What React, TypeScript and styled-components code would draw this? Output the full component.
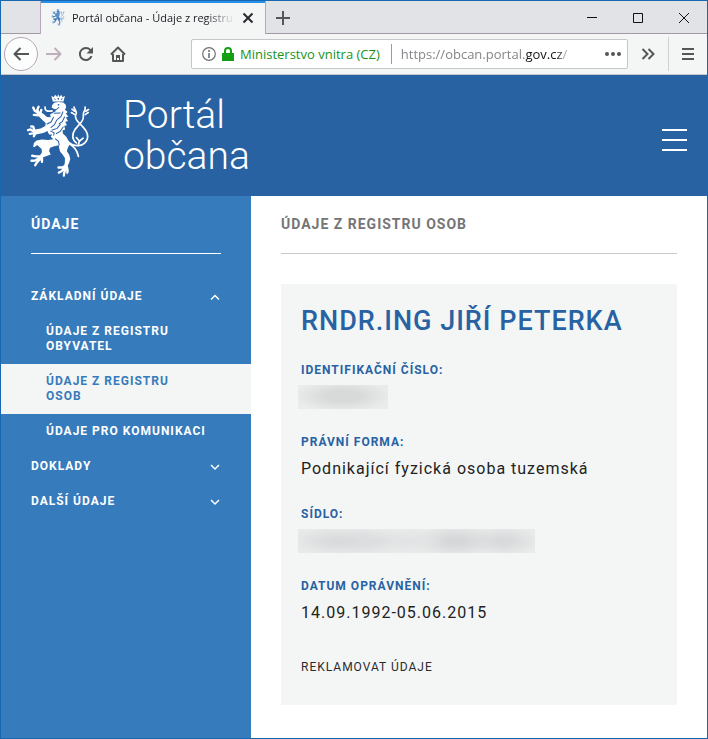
import React, { useState } from "react";
import styled, { createGlobalStyle, css } from "styled-components";

const uiFont = '"Open Sans", "Noto Sans", sans-serif';

const GlobalStyle = createGlobalStyle`
  *, *::before, *::after { box-sizing: border-box; }
  html, body, #root { height: 100%; }
  body {
    margin: 0;
    font-family: Roboto, "Liberation Sans", sans-serif;
    color: #222;
    background: #fff;
  }
  button { font: inherit; color: inherit; background: none; border: 0; padding: 0; cursor: pointer; }
  ul { list-style: none; margin: 0; padding: 0; }
  svg { display: block; flex: none; }
`;

const Window = styled.div`
  display: flex;
  flex-direction: column;
  min-height: 100%;
  border: 1px solid #1868b0;
`;

const TabStrip = styled.div`
  display: flex;
  height: 33px;
  padding-left: 39px;
  background: #e2e3e6;
  box-shadow: inset 0 -1px #a39aa6;
`;

const Tab = styled.div`
  display: flex;
  align-items: center;
  width: 226px;
  padding: 0 11px 0 10px;
  gap: 7px;
  background: #f4f6f6;
  border: solid #b9a6b6;
  border-width: 0 1px;
  box-shadow: inset 0 2px #2a8fe8;
  font-family: ${uiFont};
`;

const TabTitle = styled.span`
  flex: 1;
  overflow: hidden;
  white-space: nowrap;
  font-size: 11px;
  line-height: 16px;
  color: #1c1c20;
  mask-image: linear-gradient(to right, #000 82%, transparent);
`;

const IconButton = styled.button<{ $w: number; $tone?: string }>`
  display: flex;
  align-items: center;
  justify-content: center;
  flex: none;
  width: ${(p) => p.$w}px;
  color: ${(p) => p.$tone || "#565659"};
`;

const WindowControls = styled.div`
  display: flex;
  margin-left: auto;
`;

const NavBar = styled.div`
  display: flex;
  align-items: center;
  height: 41px;
  background: #f4f6f6;
  border-bottom: 1px solid #c5c7ca;
`;

const BackButton = styled(IconButton)`
  height: 34px;
  margin-left: 3px;
  border: 1px solid #b9a6b6;
  border-radius: 50%;
  background: #fcfdfd;
`;

const AddressBar = styled.div`
  display: flex;
  align-items: center;
  flex: 1;
  min-width: 0;
  height: 30px;
  margin-left: 57px;
  padding: 0 6px 0 10px;
  background: #fff;
  border: 1px solid #c6c7ca;
  border-radius: 2px;
  font-family: ${uiFont};
  font-size: 13px;
  line-height: 20px;
`;

const Identity = styled.button`
  display: flex;
  align-items: center;
  gap: 6px;
  flex: none;
  padding-right: 11px;
  border-right: 1px solid #9b9b9f;
  color: #17931a;
  white-space: nowrap;
`;

const Url = styled.span`
  flex: 1;
  overflow: hidden;
  padding-left: 9px;
  white-space: nowrap;
  color: #85868a;
  mask-image: linear-gradient(to right, #000 76%, transparent 92%);
  strong { font-weight: 400; color: #141416; }
`;

const Divider = styled.span`
  width: 1px;
  height: 34px;
  background: #cfd0d2;
`;

const Header = styled.header`
  display: flex;
  align-items: center;
  height: 121px;
  padding: 0 20px 0 26px;
  background: #2862a2;
  color: #fff;
`;

const Brand = styled.a`
  display: flex;
  align-items: center;
  gap: 33px;
  color: inherit;
  text-decoration: none;
  font-size: 39px;
  line-height: 41px;
  font-weight: 300;
`;

const MenuButton = styled.button`
  display: flex;
  flex-direction: column;
  gap: 8px;
  width: 25px;
  margin: 8px 0 0 auto;
  span { height: 2px; background: #fff; }
`;

const Body = styled.div`
  display: flex;
  flex: 1;
`;

const Sidebar = styled.nav`
  flex: none;
  width: 250px;
  background: #367bbb;
  color: #fff;
`;

const Heading = styled.h2<{ $side?: boolean }>`
  margin: ${(p) => (p.$side ? "0 30px 25px" : "0 0 30px")};
  padding: 20px 0;
  border-bottom: 1px solid ${(p) => (p.$side ? "#fff" : "#c9c9c9")};
  color: ${(p) => (p.$side ? "#fff" : "#757577")};
  font-size: 14px;
  line-height: 17px;
  font-weight: 700;
  letter-spacing: 1px;
`;

const navText = css`
  font-size: 12px;
  line-height: 15px;
  font-weight: 700;
  letter-spacing: 1px;
`;

const GroupButton = styled.button`
  ${navText}
  display: flex;
  align-items: center;
  justify-content: space-between;
  width: 100%;
  padding: 10px 30px;
  text-align: left;
`;

const SubLink = styled.a<{ $active?: boolean }>`
  ${navText}
  display: block;
  padding: 10px 45px;
  text-decoration: none;
  color: ${(p) => (p.$active ? "#367bbb" : "#fff")};
  background: ${(p) => (p.$active ? "#f4f6f6" : "transparent")};
`;

const Content = styled.main`
  flex: 1;
  min-width: 0;
  padding: 0 30px 33px;
  background: #fff;
`;

const Card = styled.section`
  padding: 20px 20px 29px;
  background: #f4f6f6;
`;

const Name = styled.h1`
  margin: 0 0 23px;
  color: #2862a2;
  font-size: 27px;
  line-height: 34px;
  font-weight: 500;
  letter-spacing: 1px;
`;

const Details = styled.dl`
  display: grid;
  gap: 24px;
  margin: 0 0 33px;
`;

const Term = styled.dt`
  margin-bottom: 6px;
  color: #2862a2;
  font-size: 12px;
  line-height: 18px;
  font-weight: 700;
  letter-spacing: 1px;
`;

const Value = styled.dd`
  margin: 0;
  font-size: 16px;
  line-height: 24px;
  letter-spacing: 1px;
`;

const Redacted = styled.div<{ $long?: boolean }>`
  width: ${(p) => (p.$long ? 237 : 90)}px;
  height: 24px;
  margin-left: -3px;
  background: ${(p) =>
    p.$long
      ? `radial-gradient(ellipse 52px 15px at 42px 50%, #d9dbdc 20%, transparent),
         radial-gradient(ellipse 40px 14px at 76px 50%, #dedfe0, transparent),
         radial-gradient(ellipse 30px 13px at 116px 50%, #e2e3e4, transparent),
         radial-gradient(ellipse 42px 16px at 158px 50%, #d5d7d8 20%, transparent),
         radial-gradient(ellipse 36px 15px at 206px 50%, #d8dadb 20%, transparent), #e9ebeb`
      : "radial-gradient(ellipse 48px 16px at 50% 46%, #d8dada 35%, transparent), #eaecec"};
`;

const ClaimLink = styled.a`
  display: block;
  color: #2b2b2e;
  font-size: 12px;
  line-height: 18px;
  letter-spacing: 1px;
  text-decoration: none;
`;

const stroke = { fill: "none", stroke: "currentColor" } as const;

function Lion({ width, height, color, cut }: { width: number; height: number; color: string; cut: string }) {
  const line = { fill: "none", stroke: color, strokeLinecap: "round", strokeLinejoin: "round" } as const;
  return (
    <svg width={width} height={height} viewBox="38 29 186 249" fill={color} aria-hidden="true">
      {/* crown */}
      <path d="M110 34L117 39 121 31 127 38 130 30 134 38 139 31 143 39 150 34 146 51H114Z" />
      <path d="M118 40l2 6h4zM137 46h5l1-6zM128 41h5l-1 5h-3z" fill={cut} />
      {/* head, mane and trunk */}
      <path d="M112 62L118 55 130 53 145 54 152 60 154 69 150 75 158 82 153 87 160 96 153 99 159 109 151 112 156 122 148 124 151 134 143 137 144 146 154 156 161 168 163 180 158 190 156 199 163 210 166 222 162 234 157 244 148 242 150 230 150 219 143 208 136 200 133 190 132 181 118 184 106 188 103 198 108 208 98 212 84 217 76 211 82 202 81 192 74 186 68 180 60 186 56 186 58 174 66 167 82 164 100 165 116 163 108 156 112 149 103 149 98 139 88 144 75 147 60 150 55 143 62 134 78 131 92 124 93 115 84 107 75 98 69 88 77 82 87 88 97 97 108 98 106 90 117 83 125 79 116 74 111 70Z" />
      {/* tongue */}
      <path d="M91 68C90 78 98 82 112 79" {...line} strokeWidth="5" />
      {/* paws */}
      <g {...line} strokeWidth="7">
        <path d="M74 88L68 76 72 67M72 86L60 78 56 69M72 92L58 91M78 84L80 76" />
        <path d="M60 142L48 134 41 136M60 138L56 126 50 125M60 145L46 147M62 146L58 154" />
        <path d="M80 214L64 214 53 212M76 218L62 226 51 227M78 220L67 232 62 240M82 218L82 230" />
        <path d="M153 241L142 247 131 247M152 245L140 258 132 262M154 246L148 262 147 271M156 245L158 256 157 262" />
      </g>
      {/* cuts between the locks, ribs and limbs */}
      <g fill="none" stroke={cut} strokeWidth="3" strokeLinecap="round">
        <path d="M112 72C119 78 126 76 132 69M118 86L136 85" />
        <path d="M144 82L138 96 128 104M149 97L142 111 133 117M116 98L109 112 97 118M126 106L119 120 109 128M136 119L127 131 112 136M145 127L136 140 125 146M108 139L118 144 117 151" />
        <path d="M122 162L131 169 133 180" />
      </g>
      <circle cx="131" cy="61" r="2.500" fill={cut} />
      {/* tail */}
      <g {...line} strokeWidth="5">
        <path d="M160 171C180 189 204 183 213 169 226 149 208 131 194 117 182 105 178 97 183 88 187 80 178 76 177 68" />
        <path d="M184 174C171 165 170 148 180 134L199 112C209 101 203 94 205 86 207 77 212 77 210 68" />
        <path d="M178 89L169 84M179 80L171 74M210 90L219 84M212 80L220 75" />
        <path d="M190 179L193 169 204 160M193 169L184 158" />
        <path d="M161 176C178 184 186 194 190 214" />
      </g>
    </svg>
  );
}

function Chevron({ up }: { up?: boolean }) {
  return (
    <svg width="12" height="10" viewBox="0 0 12 10" {...stroke} strokeWidth="1.500" aria-hidden="true">
      <path d={up ? "M2 7.500l4-4 4 4" : "M2 3l4 4 4-4"} />
    </svg>
  );
}

const groups = [
  {
    label: "ZÁKLADNÍ ÚDAJE",
    items: ["ÚDAJE Z REGISTRU OBYVATEL", "ÚDAJE Z REGISTRU OSOB", "ÚDAJE PRO KOMUNIKACI"],
  },
  { label: "DOKLADY", items: [] },
  { label: "DALŠÍ ÚDAJE", items: [] },
];

const details = [
  { term: "IDENTIFIKAČNÍ ČÍSLO:", value: <Redacted role="img" aria-label="Skrytý údaj" /> },
  { term: "PRÁVNÍ FORMA:", value: "Podnikající fyzická osoba tuzemská" },
  { term: "SÍDLO:", value: <Redacted $long role="img" aria-label="Skrytý údaj" /> },
  { term: "DATUM OPRÁVNĚNÍ:", value: "14.09.1992-05.06.2015" },
];

function BrowserChrome() {
  return (
    <>
      <TabStrip>
        <Tab>
          <Lion width={14} height={17} color="#3f7cbd" cut="#c3d8ec" />
          <TabTitle>Portál občana - Údaje z registru</TabTitle>
          <IconButton $w={12} $tone="#2a2a2e" aria-label="Zavřít panel">
            <svg width="12" height="12" viewBox="0 0 12 12" {...stroke} strokeWidth="2">
              <path d="M1.500 1.500l9 9M10.500 1.500l-9 9" />
            </svg>
          </IconButton>
        </Tab>
        <IconButton $w={34} aria-label="Nový panel">
          <svg width="14" height="14" viewBox="0 0 14 14" {...stroke} strokeWidth="2">
            <path d="M7 0v14M0 7h14" />
          </svg>
        </IconButton>
        <WindowControls>
          <IconButton $w={46} $tone="#111" aria-label="Minimalizovat">
            <svg width="10" height="10" viewBox="0 0 10 10" {...stroke}><path d="M0 4.500h10" /></svg>
          </IconButton>
          <IconButton $w={46} $tone="#111" aria-label="Maximalizovat">
            <svg width="10" height="10" viewBox="0 0 10 10" {...stroke}><path d="M.5.5h9v9h-9z" /></svg>
          </IconButton>
          <IconButton $w={46} $tone="#111" aria-label="Zavřít">
            <svg width="10" height="10" viewBox="0 0 10 10" {...stroke}><path d="M0 0l10 10M10 0L0 10" /></svg>
          </IconButton>
        </WindowControls>
      </TabStrip>
      <NavBar>
        <BackButton $w={34} aria-label="Zpět">
          <svg width="16" height="14" viewBox="0 0 16 14" {...stroke} strokeWidth="2" strokeLinejoin="round">
            <path d="M16 7H1.500M7.500 1l-6 6 6 6" />
          </svg>
        </BackButton>
        <IconButton $w={32} $tone="#bfaebb" aria-label="Vpřed">
          <svg width="16" height="14" viewBox="0 0 16 14" {...stroke} strokeWidth="2" strokeLinejoin="round">
            <path d="M0 7h14.500M8.500 1l6 6-6 6" />
          </svg>
        </IconButton>
        <IconButton $w={32} aria-label="Obnovit">
          <svg width="16" height="16" viewBox="0 0 16 16" {...stroke} strokeWidth="2">
            <path d="M12.800 4.600A6 6 0 1 0 13.500 10.200" />
            <path d="M15 1v6.500H8.500z" fill="currentColor" stroke="none" />
          </svg>
        </IconButton>
        <IconButton $w={32} aria-label="Domů">
          <svg width="16" height="16" viewBox="0 0 16 16" {...stroke} strokeWidth="2" strokeLinejoin="round">
            <path d="M1 8.500L8 1.500l7 7M3 8v7h10V8" />
            <path d="M6 9h4v6H9v-3H7v3H6z" fill="currentColor" stroke="none" />
          </svg>
        </IconButton>
        <AddressBar>
          <Identity>
            <svg width="14" height="14" viewBox="0 0 14 14" {...stroke} color="#707074">
              <circle cx="7" cy="7" r="6.300" strokeWidth="1.200" />
              <path d="M7 6v5M7 3v2" strokeWidth="1.600" />
            </svg>
            <svg width="12" height="14" viewBox="0 0 12 14" {...stroke} color="#12a012">
              <path d="M0 6h12v8H0z" fill="currentColor" stroke="none" />
              <path d="M3 7V4a3 3 0 0 1 6 0v3" strokeWidth="2" />
            </svg>
            <span>Ministerstvo vnitra (CZ)</span>
          </Identity>
          <Url>https://obcan.portal.<strong>gov.cz</strong>/</Url>
          <IconButton $w={16} aria-label="Akce stránky">
            <svg width="16" height="4" viewBox="0 0 16 4" fill="currentColor">
              <circle cx="2" cy="2" r="2" /><circle cx="8" cy="2" r="2" /><circle cx="14" cy="2" r="2" />
            </svg>
          </IconButton>
        </AddressBar>
        <IconButton $w={40} aria-label="Další nástroje">
          <svg width="14" height="12" viewBox="0 0 14 12" {...stroke} strokeWidth="2">
            <path d="M1.500 1l5 5-5 5M7.500 1l5 5-5 5" />
          </svg>
        </IconButton>
        <Divider />
        <IconButton $w={38} aria-label="Nabídka prohlížeče">
          <svg width="12" height="12" viewBox="0 0 12 12" {...stroke} strokeWidth="2">
            <path d="M0 1h12M0 6h12M0 11h12" />
          </svg>
        </IconButton>
      </NavBar>
    </>
  );
}

export default function App() {
  const [open, setOpen] = useState(0);
  return (
    <Window>
      <GlobalStyle />
      <BrowserChrome />
      <Header>
        <Brand href="#">
          <Lion width={63} height={84} color="#fff" cut="#2862a2" />
          <span>Portál<br />občana</span>
        </Brand>
        <MenuButton aria-label="Menu"><span /><span /><span /></MenuButton>
      </Header>
      <Body>
        <Sidebar>
          <Heading $side>ÚDAJE</Heading>
          <ul>
            {groups.map((group, i) => (
              <li key={group.label}>
                <GroupButton aria-expanded={open === i} onClick={() => setOpen(open === i ? -1 : i)}>
                  {group.label}
                  <Chevron up={open === i} />
                </GroupButton>
                {open === i && (
                  <ul>
                    {group.items.map((item, n) => (
                      <li key={item}>
                        <SubLink href="#" $active={n === 1}>{item}</SubLink>
                      </li>
                    ))}
                  </ul>
                )}
              </li>
            ))}
          </ul>
        </Sidebar>
        <Content>
          <Heading>ÚDAJE Z REGISTRU OSOB</Heading>
          <Card>
            <Name>RNDR.ING JIŘÍ PETERKA</Name>
            <Details>
              {details.map((d) => (
                <div key={d.term}>
                  <Term>{d.term}</Term>
                  <Value>{d.value}</Value>
                </div>
              ))}
            </Details>
            <ClaimLink href="#">REKLAMOVAT ÚDAJE</ClaimLink>
          </Card>
        </Content>
      </Body>
    </Window>
  );
}
